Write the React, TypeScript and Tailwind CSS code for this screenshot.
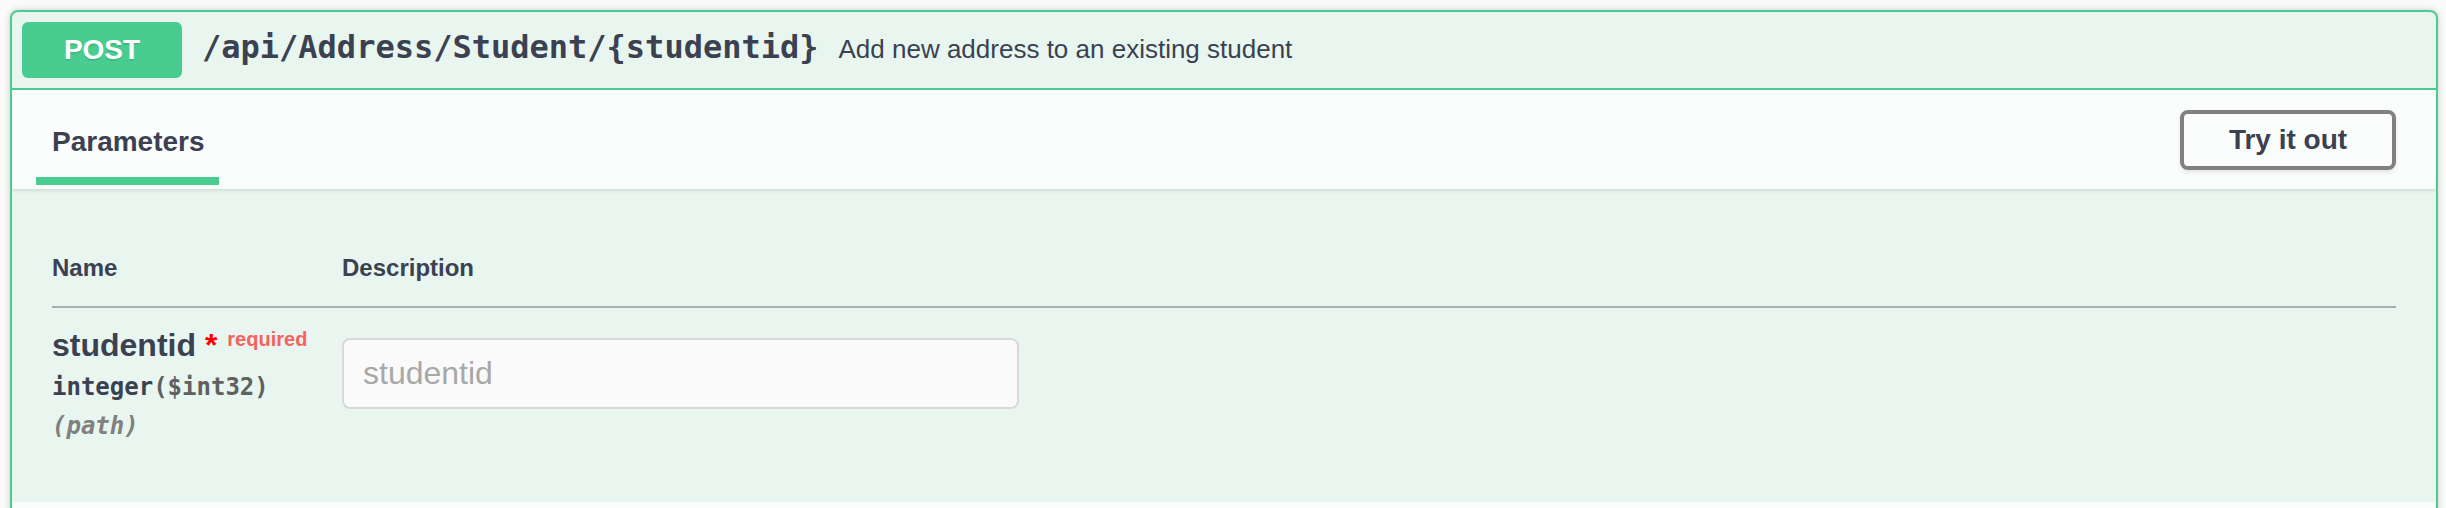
import React from 'react';

const sans = "font-['Liberation_Sans',Arial,sans-serif]";
const mono = "font-['DejaVu_Sans_Mono',Menlo,monospace]";

export default function App() {
  return (
    <div className={`h-[508px] overflow-hidden bg-[#fafafa] pl-[10px] pt-[10px] ${sans} text-[#3b4151]`}>
      <div className="w-[2428px] overflow-hidden rounded-[8px] border-2 border-[#49cc90] bg-[#e8f6ef] shadow-[0_0_6px_rgba(0,0,0,0.19)]">
        {/* Summary */}
        <div className="flex items-center border-b-2 border-[#49cc90] p-[10px]">
          <span className="flex h-[56px] w-[160px] shrink-0 items-center justify-center rounded-[6px] bg-[#49cc90] text-[28px] font-bold text-white [text-shadow:0_2px_0_rgba(0,0,0,0.1)]">
            POST
          </span>
          <div className="flex items-baseline pb-[4px]">
            <span className={`px-[20px] ${mono} text-[32px] font-bold leading-[40px]`}>
              /api/Address/Student/{'{studentid}'}
            </span>
            <span className="text-[26px]">Add new address to an existing student</span>
          </div>
        </div>

        {/* Section header */}
        <div className="relative z-10 flex h-[99px] justify-between bg-[#fbfdfc] px-[40px] shadow-[0_2px_4px_rgba(0,0,0,0.1)]">
          <div className="flex flex-col pt-[36px]">
            <span className="text-[28px] font-bold leading-[32px]">Parameters</span>
            <span className="-ml-[16px] mt-[19px] h-[8px] w-[183px] bg-[#49cc90]" />
          </div>
          <button className="self-center h-[60px] w-[216px] rounded-[8px] border-4 border-[#808080] bg-transparent text-[28px] font-bold text-[#3b4151] shadow-[0_2px_4px_rgba(0,0,0,0.1)]">
            Try it out
          </button>
        </div>

        {/* Parameters table */}
        <div className="px-[40px] pb-[60px] pt-[67px]">
          <div className="flex border-b-2 border-[#a5b1ac] pb-[26px] text-[24px] font-bold leading-[24px]">
            <div className="w-[290px]">Name</div>
            <div>Description</div>
          </div>
          <div className="flex pt-[17px]">
            <div className="w-[290px]">
              <div className="text-[32px] font-bold leading-[40px]">
                studentid
                <span className="text-[#ff0000]">&nbsp;*</span>
                <span className="px-[10px] align-[10px] text-[20px] leading-none text-[#f6625f]">required</span>
              </div>
              <div className={`mt-[6px] ${mono} text-[24px] font-bold leading-[32px]`}>
                integer<span className="text-[#606060]">($int32)</span>
              </div>
              <div className={`mt-[7px] ${mono} text-[24px] font-semibold italic leading-[32px] text-[#808080]`}>
                (path)
              </div>
            </div>
            <div className="pt-[13px]">
              <input
                type="text"
                placeholder="studentid"
                className={`h-[71px] w-[677px] rounded-[8px] border-2 border-[#d9d9d9] bg-[#fafafa] px-[19px] ${sans} text-[32px] outline-none placeholder:text-[#a8a8a8]`}
              />
            </div>
          </div>
        </div>

        {/* Next section header (cut off) */}
        <div className="h-[40px] bg-[#fbfdfc]" />
      </div>
    </div>
  );
}
